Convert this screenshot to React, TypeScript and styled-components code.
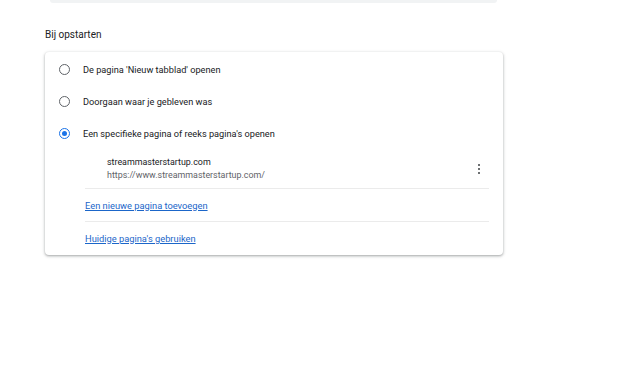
import styled, { createGlobalStyle } from "styled-components";

const GlobalStyle = createGlobalStyle`
  body {
    margin: 0;
    background: #ffffff;
    font-family: Roboto, "Liberation Sans", Arial, sans-serif;
    color: #202124;
  }
`;

const Page = styled.div`
  width: 640px;
  height: 368px;
  padding-left: 45px;
  box-sizing: border-box;
`;

const TopStrip = styled.div`
  margin-left: 5px;
  width: 447px;
  height: 3px;
  background: #f1f3f4;
  border-radius: 0 0 6px 6px;
`;

const Heading = styled.h2`
  margin: 26px 0 11px 0;
  font-size: 10px;
  line-height: 12px;
  font-weight: 400;
  color: #202124;
`;

const Card = styled.div`
  width: 458px;
  box-sizing: border-box;
  padding: 1px 0 1px 0;
  border-radius: 4px;
  background: #ffffff;
  box-shadow: 0 1px 2px rgba(60, 64, 67, 0.3),
    0 1px 3px 1px rgba(60, 64, 67, 0.15);
`;

const RadioRow = styled.label`
  display: flex;
  align-items: center;
  gap: 13px;
  height: 32px;
  padding-left: 14px;
  font-size: 9.2px;
`;

const Radio = styled.span<{ $checked?: boolean }>`
  width: 11px;
  height: 11px;
  box-sizing: border-box;
  border-radius: 50%;
  border: 1.6px solid ${(p) => (p.$checked ? "#1a73e8" : "#5f6368")};
  display: flex;
  align-items: center;
  justify-content: center;

  &::after {
    content: "";
    display: ${(p) => (p.$checked ? "block" : "none")};
    width: 5px;
    height: 5px;
    border-radius: 50%;
    background: #1a73e8;
  }
`;

const SubList = styled.div`
  margin: 0 14px 0 40px;
`;

const Entry = styled.div`
  display: flex;
  align-items: center;
  padding: 7px 9px 6px 22px;
  border-bottom: 1px solid #ebebeb;
`;

const EntryText = styled.div`
  flex: 1;
  display: flex;
  flex-direction: column;
  font-size: 8.9px;
  line-height: 13px;
`;

const EntryUrl = styled.span`
  color: #5f6368;
`;

const Kebab = styled.button`
  display: flex;
  flex-direction: column;
  gap: 1.5px;
  padding: 0;
  border: none;
  background: none;

  span {
    width: 2.2px;
    height: 2.2px;
    border-radius: 50%;
    background: #3c4043;
  }
`;

const LinkRow = styled.div<{ $divider?: boolean }>`
  display: flex;
  align-items: center;
  height: 32px;
  border-bottom: ${(p) => (p.$divider ? "1px solid #ebebeb" : "none")};
`;

const Link = styled.a`
  font-size: 9.3px;
  color: #1b66c9;
  text-decoration: underline;
  cursor: pointer;
`;

const options = [
  { label: "De pagina 'Nieuw tabblad' openen", checked: false },
  { label: "Doorgaan waar je gebleven was", checked: false },
  { label: "Een specifieke pagina of reeks pagina's openen", checked: true },
];

export default function App() {
  return (
    <Page>
      <GlobalStyle />
      <TopStrip />
      <Heading>Bij opstarten</Heading>
      <Card>
        {options.map((o) => (
          <RadioRow key={o.label}>
            <Radio $checked={o.checked} />
            {o.label}
          </RadioRow>
        ))}
        <SubList>
          <Entry>
            <EntryText>
              <span>streammasterstartup.com</span>
              <EntryUrl>https://www.streammasterstartup.com/</EntryUrl>
            </EntryText>
            <Kebab aria-label="Meer acties">
              <span />
              <span />
              <span />
            </Kebab>
          </Entry>
          <LinkRow $divider>
            <Link>Een nieuwe pagina toevoegen</Link>
          </LinkRow>
          <LinkRow>
            <Link>Huidige pagina's gebruiken</Link>
          </LinkRow>
        </SubList>
      </Card>
    </Page>
  );
}
